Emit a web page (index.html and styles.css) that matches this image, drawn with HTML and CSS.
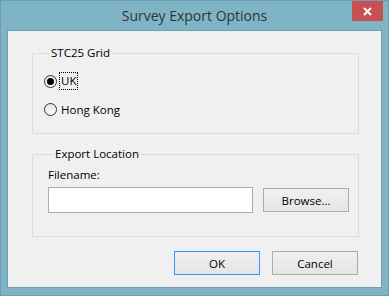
FILE: index.html
```html
<!DOCTYPE html>
<html lang="en">
<head>
  <meta charset="UTF-8">
  <meta name="viewport" content="width=device-width, initial-scale=1.0">
  <title>Survey Export Options</title>
  <link rel="stylesheet" href="styles.css">
</head>
<body>
  <div class="window">
    <div class="titlebar">
      <span></span>
      <span class="title">Survey Export Options</span>
      <button class="close" title="Close">
        <svg width="9" height="9" viewBox="0 0 9 9"><path d="M1 1 L8 8 M8 1 L1 8" stroke="#fff" stroke-width="2" fill="none"/></svg>
      </button>
    </div>

    <div class="client">
      <fieldset class="group grid">
        <legend>STC25 Grid</legend>
        <label class="radio"><span class="dot checked"></span><span class="focus">UK</span></label>
        <label class="radio"><span class="dot"></span><span class="text">Hong Kong</span></label>
      </fieldset>

      <fieldset class="group export">
        <legend>Export Location</legend>
        <div class="field-label">Filename:</div>
        <div class="row">
          <div class="input"></div>
          <button class="btn">Browse...</button>
        </div>
      </fieldset>

      <div class="actions">
        <button class="btn default">OK</button>
        <button class="btn">Cancel</button>
      </div>
    </div>
  </div>
</body>
</html>
```

FILE: styles.css
```css
body {
  margin: 0;
  padding: 0;
  font-family: "Open Sans", "Noto Sans", sans-serif;
  font-size: 11.5px;
  color: #000;
}
.window {
  width: 389px;
  height: 296px;
  box-sizing: border-box;
  background-color: #7fb4c6;
  border: 1px solid #6c9fb1;
}
.titlebar {
  height: 29px;
  display: grid;
  grid-template-columns: 1fr auto 1fr;
  align-items: start;
}
.title {
  font-size: 14px;
  color: #333;
  line-height: 30px;
}
.close {
  justify-self: end;
  width: 31px;
  height: 20px;
  margin-right: 5px;
  border: none;
  padding: 0;
  background-color: #c75050;
  display: flex;
  align-items: center;
  justify-content: center;
}
.client {
  margin-left: 6px;
  width: 373px;
  height: 256px;
  background-color: #f0f0f0;
  border: 1px solid #6f9db0;
  overflow: hidden;
}
.group {
  margin: 0 0 0 24px;
  width: 327px;
  box-sizing: border-box;
  border: 1px solid #dcdcdc;
  padding: 0;
  min-width: 0;
}
.group legend {
  margin-left: 5px;
  padding: 0 2px;
  line-height: 16px;
}
.grid {
  margin-top: 14px;
  height: 89px;
  padding-left: 11px;
}
.radio {
  display: flex;
  align-items: center;
  height: 18px;
  margin-top: 11px;
}
.radio + .radio {
  margin-top: 10px;
}
.dot {
  width: 13px;
  height: 13px;
  box-sizing: border-box;
  border: 1px solid #333;
  border-radius: 50%;
  background: linear-gradient(#e6e6e6, #fafafa);
  display: flex;
  align-items: center;
  justify-content: center;
  margin-right: 3px;
}
.dot.checked::after {
  content: "";
  width: 7px;
  height: 7px;
  border-radius: 50%;
  background-color: #000;
}
.focus {
  outline: 1px dotted #000;
  padding: 0 1px;
  line-height: 16px;
}
.text {
  margin-left: 1px;
}
.export {
  margin-top: 12px;
  height: 91px;
  padding-left: 15px;
}
.field-label {
  margin-top: 5px;
  line-height: 16px;
}
.row {
  display: flex;
  align-items: center;
  gap: 10px;
  margin-top: 4px;
}
.input {
  width: 205px;
  height: 26px;
  box-sizing: border-box;
  background-color: #fff;
  border: 1px solid #abadb3;
}
.btn {
  width: 86px;
  height: 24px;
  box-sizing: border-box;
  border: 1px solid #acacac;
  background: linear-gradient(#f0f0f0, #e5e5e5);
  font-family: inherit;
  font-size: 11.5px;
  color: #000;
  padding: 0;
}
.btn.default {
  border-color: #3399ff;
}
.actions {
  display: flex;
  justify-content: flex-end;
  gap: 12px;
  margin-top: 14px;
  margin-right: 23px;
}
```
